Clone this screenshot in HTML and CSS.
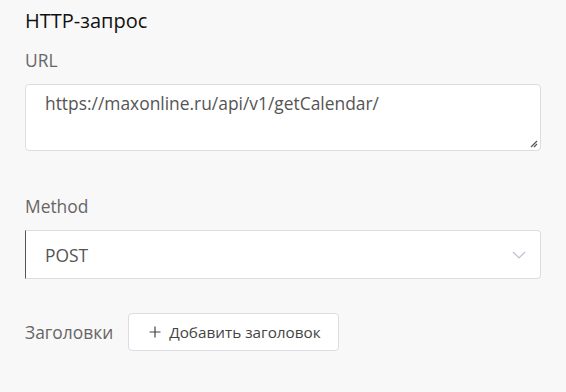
FILE: index.html
```html
<!DOCTYPE html>
<html lang="ru">
<head>
<meta charset="utf-8">
<link rel="stylesheet" href="styles.css">
</head>
<body>
<div class="panel">
  <h2 class="title">HTTP-запрос</h2>
  <div class="field">
    <div class="label">URL</div>
    <div class="textarea">
      <span>https://maxonline.ru/api/v1/getCalendar/</span>
      <svg class="grip" width="10" height="10" viewBox="0 0 10 10"><path d="M9 3 L3 9 M9 6 L6 9" stroke="#555" stroke-width="1.2" fill="none"/></svg>
    </div>
  </div>
  <div class="field method">
    <div class="label">Method</div>
    <div class="select">
      <span>POST</span>
      <svg class="chev" width="14" height="8" viewBox="0 0 14 8"><path d="M1 1 L7 7 L13 1" stroke="#b8c0d4" stroke-width="1.2" fill="none"/></svg>
    </div>
  </div>
  <div class="headers">
    <span class="label-inline">Заголовки</span>
    <button class="add-btn"><svg width="12" height="12" viewBox="0 0 12 12"><path d="M6 0.5 V11.5 M0.5 6 H11.5" stroke="#444" stroke-width="1.2"/></svg>Добавить заголовок</button>
  </div>
</div>
</body>
</html>
```
FILE: styles.css
```css
html, body {
  margin: 0;
  padding: 0;
  background: #f8f8f8;
}
body {
  font-family: "Open Sans", sans-serif;
  color: #555;
}
.panel {
  padding: 6px 25px 0 25px;
  width: 516px;
}
.title {
  margin: 0;
  font-size: 20px;
  font-weight: 400;
  color: #111;
  line-height: 30px;
}
.field {
  margin-top: 13px;
}
.label {
  font-size: 17.4px;
  color: #666;
  line-height: 22px;
  margin-bottom: 13px;
}
.textarea {
  position: relative;
  box-sizing: border-box;
  height: 67px;
  background: #fff;
  border: 1px solid #dcdce4;
  border-radius: 4px;
  padding: 5px 19px;
  font-size: 17.4px;
  line-height: 26px;
  color: #555;
}
.grip {
  position: absolute;
  right: 2px;
  bottom: 2px;
}
.method {
  margin-top: 44px;
}
.select {
  box-sizing: border-box;
  height: 49px;
  background: #fff;
  border: 1px solid #dcdce4;
  border-left: 1px solid #555;
  border-radius: 0 4px 4px 0;
  padding: 0 14px 0 19px;
  display: flex;
  align-items: center;
  justify-content: space-between;
  font-size: 17.4px;
  color: #555;
}
.headers {
  margin-top: 34px;
  display: flex;
  align-items: center;
  gap: 15px;
}
.label-inline {
  font-size: 17.4px;
  color: #666;
}
.add-btn {
  display: flex;
  align-items: center;
  gap: 8px;
  height: 38px;
  box-sizing: border-box;
  padding: 0 17px 0 20px;
  background: #fff;
  border: 1px solid #dcdce4;
  border-radius: 4px;
  font-family: "Open Sans", sans-serif;
  font-size: 15.3px;
  color: #444;
}
```
